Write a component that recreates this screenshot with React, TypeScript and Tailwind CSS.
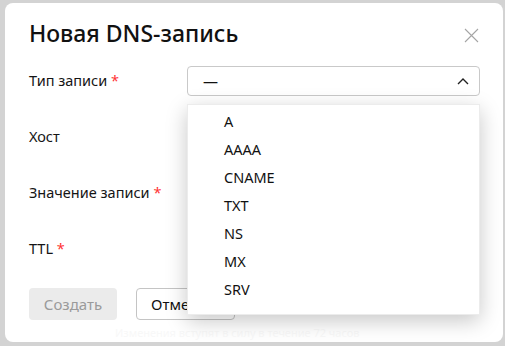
import React from "react";

const items = ["A", "AAAA", "CNAME", "TXT", "NS", "MX", "SRV"];

function Label({ text, required }: { text: string; required?: boolean }) {
  return (
    <div className="w-[158px] shrink-0 text-[14.5px] text-[#151515]">
      {text}
      {required && <span className="text-[#f33]"> *</span>}
    </div>
  );
}

export default function App() {
  return (
    <div
      className="relative w-[505px] h-[346px] overflow-hidden bg-[#d3d3d3] pl-[5px] pt-[3px] pr-[2px] pb-[4px]"
      style={{ fontFamily: '"Noto Sans", "Open Sans", sans-serif' }}
    >
      <div className="relative w-full h-full bg-white rounded-[8px] pl-[24px] pr-[23px]">
        <div className="flex items-start justify-between pt-[14px]">
          <h1 className="text-[23px] leading-[32px] font-medium text-[#111]">Новая DNS-запись</h1>
          <svg width="15" height="15" viewBox="0 0 15 15" className="mt-[11px] mr-[1px]">
            <path d="M1 1 L14 14 M14 1 L1 14" stroke="#a5a5a5" strokeWidth="1.1" fill="none" />
          </svg>
        </div>

        <div className="mt-[17px] flex flex-col gap-[26px]">
          <div className="flex items-center h-[30px]">
            <Label text="Тип записи" required />
            <div className="flex-1 h-[30px] border border-[#c9c9c9] rounded-[4px] flex items-center justify-between pl-[15px] pr-[10px]">
              <span className="text-[15px] text-[#111]">—</span>
              <svg width="12" height="7" viewBox="0 0 12 7">
                <path d="M1 6 L6 1 L11 6" stroke="#222" strokeWidth="1.4" fill="none" />
              </svg>
            </div>
          </div>
          <div className="flex items-center h-[30px]">
            <Label text="Хост" />
            <div className="flex-1 h-[30px] border border-[#c9c9c9] rounded-[4px]" />
          </div>
          <div className="flex items-center h-[30px]">
            <Label text="Значение записи" required />
            <div className="flex-1 h-[30px] border border-[#c9c9c9] rounded-[4px]" />
          </div>
          <div className="flex items-center h-[30px]">
            <Label text="TTL" required />
            <div className="flex-1 h-[30px] border border-[#c9c9c9] rounded-[4px]" />
          </div>
        </div>

        <div className="mt-[24px] flex gap-[19px]">
          <button className="w-[88px] h-[32px] rounded-[4px] bg-[#ebebeb] text-[15px] text-[#9a9a9a]">Создать</button>
          <button className="w-[99px] h-[32px] rounded-[4px] border border-[#c4c4c4] text-[15px] text-[#111] text-left pl-[14px]">Отмена</button>
        </div>
        <div className="mt-[6px] pl-[86px] text-[11px] leading-[14px] text-[#f8f8f8]">
          Изменения вступят в силу в течение 72 часов
        </div>
      </div>

      <div className="absolute left-[187px] top-[104px] w-[293px] h-[211px] bg-white border border-[#ececec] shadow-[0_6px_20px_rgba(0,0,0,0.22)] pt-[3px]">
        {items.map((it) => (
          <div key={it} className="h-[28px] flex items-center pl-[36px] text-[14.5px] text-[#111]">
            {it}
          </div>
        ))}
      </div>
    </div>
  );
}
